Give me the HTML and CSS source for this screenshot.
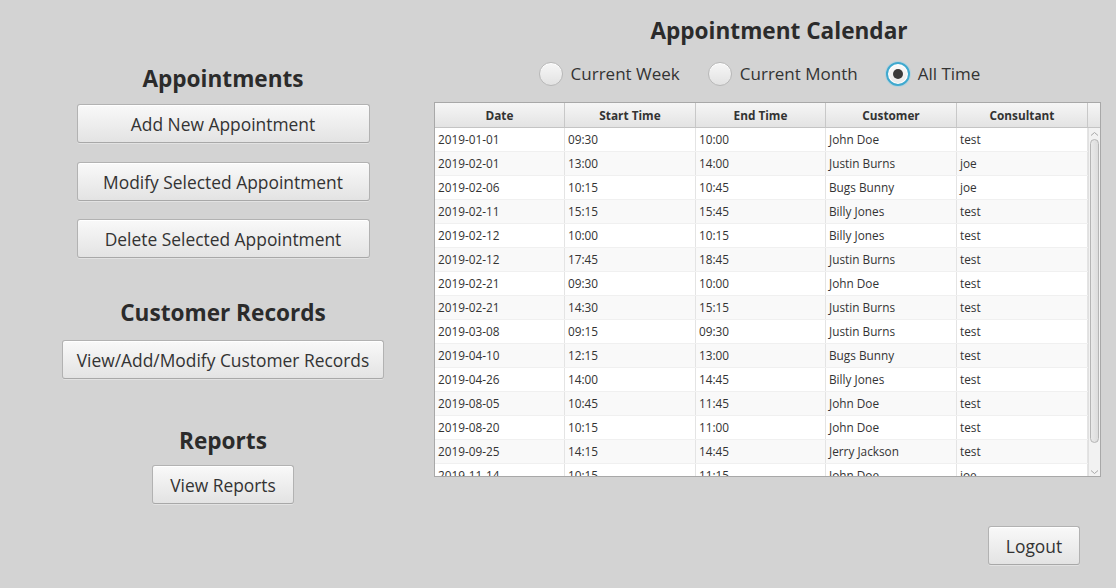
FILE: index.html
```html
<!DOCTYPE html>
<html>
<head>
<meta charset="utf-8">
<link rel="stylesheet" href="styles.css">
</head>
<body>
<div class="page">
  <div class="left">
    <h2 class="heading h-appt">Appointments</h2>
    <button class="btn btn-wide b1">Add New Appointment</button>
    <button class="btn btn-wide b2">Modify Selected Appointment</button>
    <button class="btn btn-wide b3">Delete Selected Appointment</button>
    <h2 class="heading h-cust">Customer Records</h2>
    <button class="btn btn-cust">View/Add/Modify Customer Records</button>
    <h2 class="heading h-rep">Reports</h2>
    <button class="btn btn-rep">View Reports</button>
  </div>
  <div class="right">
    <h1 class="heading title">Appointment Calendar</h1>
    <div class="radios">
      <label class="radio"><span class="dot"></span>Current Week</label>
      <label class="radio"><span class="dot"></span>Current Month</label>
      <label class="radio"><span class="dot on"></span>All Time</label>
    </div>
    <div class="table">
      <div class="thead">
        <div class="th c1">Date</div>
        <div class="th c2">Start Time</div>
        <div class="th c3">End Time</div>
        <div class="th c4">Customer</div>
        <div class="th c5">Consultant</div>
        <div class="th corner"></div>
      </div>
      <div class="tbody">
        <div class="rows">
          <div class="tr"><div class="td c1">2019-01-01</div><div class="td c2">09:30</div><div class="td c3">10:00</div><div class="td c4">John Doe</div><div class="td c5">test</div></div>
          <div class="tr"><div class="td c1">2019-02-01</div><div class="td c2">13:00</div><div class="td c3">14:00</div><div class="td c4">Justin Burns</div><div class="td c5">joe</div></div>
          <div class="tr"><div class="td c1">2019-02-06</div><div class="td c2">10:15</div><div class="td c3">10:45</div><div class="td c4">Bugs Bunny</div><div class="td c5">joe</div></div>
          <div class="tr"><div class="td c1">2019-02-11</div><div class="td c2">15:15</div><div class="td c3">15:45</div><div class="td c4">Billy Jones</div><div class="td c5">test</div></div>
          <div class="tr"><div class="td c1">2019-02-12</div><div class="td c2">10:00</div><div class="td c3">10:15</div><div class="td c4">Billy Jones</div><div class="td c5">test</div></div>
          <div class="tr"><div class="td c1">2019-02-12</div><div class="td c2">17:45</div><div class="td c3">18:45</div><div class="td c4">Justin Burns</div><div class="td c5">test</div></div>
          <div class="tr"><div class="td c1">2019-02-21</div><div class="td c2">09:30</div><div class="td c3">10:00</div><div class="td c4">John Doe</div><div class="td c5">test</div></div>
          <div class="tr"><div class="td c1">2019-02-21</div><div class="td c2">14:30</div><div class="td c3">15:15</div><div class="td c4">Justin Burns</div><div class="td c5">test</div></div>
          <div class="tr"><div class="td c1">2019-03-08</div><div class="td c2">09:15</div><div class="td c3">09:30</div><div class="td c4">Justin Burns</div><div class="td c5">test</div></div>
          <div class="tr"><div class="td c1">2019-04-10</div><div class="td c2">12:15</div><div class="td c3">13:00</div><div class="td c4">Bugs Bunny</div><div class="td c5">test</div></div>
          <div class="tr"><div class="td c1">2019-04-26</div><div class="td c2">14:00</div><div class="td c3">14:45</div><div class="td c4">Billy Jones</div><div class="td c5">test</div></div>
          <div class="tr"><div class="td c1">2019-08-05</div><div class="td c2">10:45</div><div class="td c3">11:45</div><div class="td c4">John Doe</div><div class="td c5">test</div></div>
          <div class="tr"><div class="td c1">2019-08-20</div><div class="td c2">10:15</div><div class="td c3">11:00</div><div class="td c4">John Doe</div><div class="td c5">test</div></div>
          <div class="tr"><div class="td c1">2019-09-25</div><div class="td c2">14:15</div><div class="td c3">14:45</div><div class="td c4">Jerry Jackson</div><div class="td c5">test</div></div>
          <div class="tr"><div class="td c1">2019-11-14</div><div class="td c2">10:15</div><div class="td c3">11:15</div><div class="td c4">John Doe</div><div class="td c5">joe</div></div>
        </div>
        <div class="vscroll">
          <svg class="arrow" width="11" height="8" viewBox="0 0 11 8"><path d="M2 5.5 L5.5 2.5 L9 5.5" fill="none" stroke="#a8a8a8" stroke-width="1"/></svg>
          <div class="track"><div class="thumb"></div></div>
          <svg class="arrow" width="11" height="8" viewBox="0 0 11 8"><path d="M2 2.5 L5.5 5.5 L9 2.5" fill="none" stroke="#a8a8a8" stroke-width="1"/></svg>
        </div>
      </div>
    </div>
    <div class="footer">
      <button class="btn btn-logout">Logout</button>
    </div>
  </div>
</div>
</body>
</html>
```

FILE: styles.css
```css
* { box-sizing: border-box; }
html, body { margin: 0; padding: 0; }
body {
  width: 1116px;
  height: 588px;
  background: #d3d3d3;
  font-family: "Open Sans", "Noto Sans", sans-serif;
  color: #333333;
  overflow: hidden;
}
.page {
  display: flex;
  width: 1116px;
  height: 588px;
}
.left {
  width: 434px;
  padding-left: 12px;
  display: flex;
  flex-direction: column;
  align-items: center;
}
.heading {
  margin: 0;
  font-weight: 700;
  font-size: 22.6px;
  line-height: 30px;
  color: #2b2b2b;
}
.h-appt { margin-top: 64px; }
.h-cust { margin-top: 40px; }
.h-rep { margin-top: 47px; }

.btn {
  font-family: "Open Sans", "Noto Sans", sans-serif;
  font-size: 17.4px;
  color: #333333;
  height: 39px;
  padding: 0 6px;
  border: 1px solid #b2b2b2;
  border-bottom-color: #a8a8a8;
  border-radius: 3px;
  background: linear-gradient(#f9f9f9, #e3e3e3);
  box-shadow: inset 0 1px 0 #ffffff, 0 1px 0 rgba(255,255,255,0.35);
  white-space: nowrap;
}
.btn-wide { width: 293px; }
.b1 { margin-top: 10px; }
.b2 { margin-top: 19px; }
.b3 { margin-top: 18px; }
.btn-cust { width: 322px; margin-top: 12px; }
.btn-rep { width: 142px; margin-top: 9px; }

.right {
  width: 682px;
  display: flex;
  flex-direction: column;
  padding-top: 16px;
}
.title {
  padding-left: 8px;
  text-align: center;
  width: 682px;
}
.radios {
  margin-top: 16px;
  height: 24px;
  display: flex;
  justify-content: center;
  padding-right: 31px;
  gap: 28px;
}
.radio {
  display: flex;
  align-items: center;
  gap: 8px;
  font-size: 17px;
  line-height: 24px;
  color: #333333;
}
.dot {
  width: 24px;
  height: 24px;
  border-radius: 50%;
  border: 1px solid #b8b8b8;
  background: linear-gradient(#f7f7f7, #e2e2e2);
  box-shadow: inset 0 1px 0 #ffffff;
  display: flex;
  align-items: center;
  justify-content: center;
}
.dot.on {
  border: 2px solid #3fa9cf;
  background: linear-gradient(#fbfbfb, #e9e9e9);
  box-shadow: 0 0 0 1px rgba(160, 210, 230, 0.6), inset 0 0 0 1px #ffffff;
}
.dot.on::after {
  content: "";
  width: 10px;
  height: 10px;
  border-radius: 50%;
  background: #3a3a3a;
}

.table {
  margin-top: 16px;
  width: 667px;
  height: 375px;
  border: 1px solid #a8a8a8;
  background: #ffffff;
  display: flex;
  flex-direction: column;
  font-size: 11.8px;
}
.thead {
  display: flex;
  height: 25px;
  flex: none;
  background: linear-gradient(#f6f6f6, #e3e3e3);
  border-bottom: 1px solid #c4c4c4;
}
.th {
  font-weight: 700;
  color: #333333;
  text-align: center;
  line-height: 24px;
  border-right: 1px solid #c8c8c8;
}
.c1 { width: 130px; }
.c2 { width: 131px; }
.c3 { width: 130px; }
.c4 { width: 131px; }
.c5 { width: 131px; }
.th.corner { width: 12px; border-right: none; }

.tbody {
  flex: 1;
  display: flex;
  overflow: hidden;
}
.rows {
  width: 653px;
  overflow: hidden;
}
.tr {
  display: flex;
  height: 24px;
  background: #ffffff;
  border-bottom: 1px solid #f0f0f0;
}
.tr:nth-child(even) { background: #f9f9f9; }
.td {
  line-height: 22px;
  padding-left: 3px;
  color: #333333;
  border-right: 1px solid #e4e4e4;
  white-space: nowrap;
}
.vscroll {
  width: 12px;
  display: flex;
  flex-direction: column;
  align-items: center;
  background: #f2f2f2;
  border-left: 1px solid #e0e0e0;
}
.arrow { flex: none; margin-top: 2px; }
.track {
  flex: 1;
  width: 100%;
  padding: 1px 1px;
  display: flex;
}
.thumb {
  width: 100%;
  height: 304px;
  border: 1px solid #b5b5b5;
  border-radius: 5px;
  background: linear-gradient(90deg, #e9e9e9, #dcdcdc);
}
.footer {
  margin-top: 49px;
  display: flex;
  justify-content: flex-end;
  padding-right: 36px;
}
.btn-logout { width: 92px; }
```
